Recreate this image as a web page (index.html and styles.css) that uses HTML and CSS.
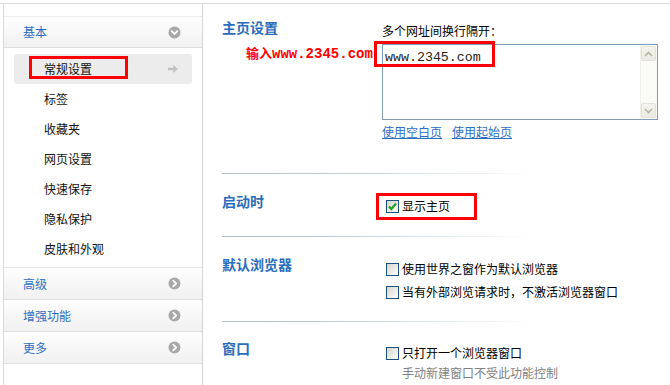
FILE: index.html
```html
<!DOCTYPE html>
<html lang="zh-CN">
<head>
<meta charset="utf-8">
<title>设置</title>
<link rel="stylesheet" href="styles.css">
</head>
<body>
<div class="page">
  <aside class="sidebar">
    <div class="sidebar-top"></div>
    <div class="group-header first">
      <span class="group-name">基本</span>
      <svg class="circle-icon" width="13" height="13" viewBox="0 0 13 13"><circle cx="6.5" cy="6.5" r="6" fill="#a8a8a8"/><path d="M3.7 5.2L6.5 8L9.3 5.2" fill="none" stroke="#fff" stroke-width="1.9" stroke-linecap="round" stroke-linejoin="round"/></svg>
    </div>
    <ul class="nav-list">
      <li class="nav-item active"><span>常规设置</span><svg class="nav-arrow" width="10" height="8" viewBox="0 0 10 8"><path d="M0 2.8h5.2V0L10 4L5.2 8V5.2H0z" fill="#c2c2c2"/></svg></li>
      <li class="nav-item"><span>标签</span></li>
      <li class="nav-item"><span>收藏夹</span></li>
      <li class="nav-item"><span>网页设置</span></li>
      <li class="nav-item"><span>快速保存</span></li>
      <li class="nav-item"><span>隐私保护</span></li>
      <li class="nav-item"><span>皮肤和外观</span></li>
    </ul>
    <div class="group-header">
      <span class="group-name">高级</span>
      <svg class="circle-icon" width="13" height="13" viewBox="0 0 13 13"><circle cx="6.5" cy="6.5" r="6" fill="#a8a8a8"/><path d="M5.3 3.7L8.1 6.5L5.3 9.3" fill="none" stroke="#fff" stroke-width="1.9" stroke-linecap="round" stroke-linejoin="round"/></svg>
    </div>
    <div class="group-header">
      <span class="group-name">增强功能</span>
      <svg class="circle-icon" width="13" height="13" viewBox="0 0 13 13"><circle cx="6.5" cy="6.5" r="6" fill="#a8a8a8"/><path d="M5.3 3.7L8.1 6.5L5.3 9.3" fill="none" stroke="#fff" stroke-width="1.9" stroke-linecap="round" stroke-linejoin="round"/></svg>
    </div>
    <div class="group-header">
      <span class="group-name">更多</span>
      <svg class="circle-icon" width="13" height="13" viewBox="0 0 13 13"><circle cx="6.5" cy="6.5" r="6" fill="#a8a8a8"/><path d="M5.3 3.7L8.1 6.5L5.3 9.3" fill="none" stroke="#fff" stroke-width="1.9" stroke-linecap="round" stroke-linejoin="round"/></svg>
    </div>
  </aside>

  <main class="content">
    <section class="section sec-home">
      <h2 class="section-title">主页设置</h2>
      <div class="controls">
        <div class="field-label">多个网址间换行隔开：</div>
        <div class="textbox">
          <div class="textbox-text">www.2345.com</div>
          <div class="scrollbar">
            <div class="sb-btn"><svg width="9" height="6" viewBox="0 0 9 6"><path d="M1 5L4.5 1.5L8 5" fill="none" stroke="#b5b5a8" stroke-width="1.6"/></svg></div>
            <div class="sb-btn"><svg width="9" height="6" viewBox="0 0 9 6"><path d="M1 1L4.5 4.5L8 1" fill="none" stroke="#b5b5a8" stroke-width="1.6"/></svg></div>
          </div>
        </div>
        <div class="links"><a class="link" href="#">使用空白页</a><a class="link" href="#">使用起始页</a></div>
      </div>
    </section>
    <div class="divider"></div>

    <section class="section sec-start">
      <h2 class="section-title">启动时</h2>
      <div class="controls">
        <label class="check-row"><span class="checkbox checked"><svg width="11" height="11" viewBox="0 0 11 11"><path d="M2 5.5L4.3 8L9 2.5" fill="none" stroke="#22a322" stroke-width="2.2"/></svg></span><span>显示主页</span></label>
      </div>
    </section>
    <div class="divider"></div>

    <section class="section sec-default">
      <h2 class="section-title">默认浏览器</h2>
      <div class="controls">
        <label class="check-row"><span class="checkbox"></span><span>使用世界之窗作为默认浏览器</span></label>
        <label class="check-row second"><span class="checkbox"></span><span>当有外部浏览请求时，不激活浏览器窗口</span></label>
      </div>
    </section>
    <div class="divider"></div>

    <section class="section sec-window">
      <h2 class="section-title">窗口</h2>
      <div class="controls">
        <label class="check-row"><span class="checkbox"></span><span>只打开一个浏览器窗口</span></label>
        <div class="hint">手动新建窗口不受此功能控制</div>
      </div>
    </section>
  </main>

  <div class="annot-box box-nav"></div>
  <div class="annot-text"><span class="annot-cn">输入</span><span class="annot-mono">www.2345.com</span></div>
  <div class="annot-box box-url"></div>
  <div class="annot-box box-check"></div>
</div>
</body>
</html>
```

FILE: styles.css
```css
* { box-sizing: border-box; }
html, body {
  margin: 0;
  padding: 0;
  background: #fff;
}
body {
  font-family: "Noto Sans CJK SC", "Liberation Sans", sans-serif;
  font-size: 12px;
  color: #000;
  width: 670px;
  height: 385px;
  overflow: hidden;
}
.page {
  position: relative;
  margin-top: 3px;
  border-top: 1px solid #dcdcdc;
  display: flex;
  height: 382px;
}

/* sidebar */
.sidebar {
  width: 200px;
  margin-left: 3px;
  border-left: 1px solid #dadada;
  border-right: 1px solid #d6d6d6;
  background: #fff;
  flex: none;
}
.sidebar-top { height: 12px; }
.group-header {
  height: 32px;
  border-bottom: 1px solid #dedede;
  background: linear-gradient(#fefefe, #f1f1f1);
  display: flex;
  align-items: center;
  justify-content: space-between;
  padding: 0 21px 0 19px;
  color: #2a6ec4;
  line-height: 16px;
}
.group-header.first {
  height: 32px;
  border-top: 1px solid #ececec;
}
.circle-icon { display: block; }
.nav-list {
  list-style: none;
  margin: 0;
  padding: 6px 0 3px;
  border-bottom: 1px solid #e6e6e6;
}
.nav-item {
  height: 30px;
  margin: 0 10px;
  padding: 0 14px 0 30px;
  display: flex;
  align-items: center;
  justify-content: space-between;
  line-height: 16px;
  color: #111;
  border-radius: 3px;
}
.nav-item.active { background: #ececec; }
.nav-arrow { display: block; }

/* content */
.content {
  flex: 1;
  min-width: 0;
}
.section {
  display: grid;
  grid-template-columns: 160px 1fr;
  padding-left: 19px;
}
.section-title {
  margin: 0;
  font-size: 14px;
  font-weight: bold;
  line-height: 20px;
  color: #2b6dbd;
}
.controls { margin-top: 6px; }
.sec-home { padding-top: 13px; padding-bottom: 33px; }
.sec-start { padding-top: 17px; padding-bottom: 21px; }
.sec-default { padding-top: 17px; padding-bottom: 20px; }
.sec-window { padding-top: 16px; }

.divider {
  height: 1px;
  width: 310px;
  margin-left: 19px;
  background: linear-gradient(to right, #b6c2ca 0%, #bcc8d0 30%, #d0dce4 55%, #e6eef2 75%, #f4f6f7 90%, rgba(255,255,255,0) 100%);
}

.field-label { line-height: 16px; }
.textbox {
  margin-top: 5px;
  width: 276px;
  height: 76px;
  border: 1px solid #7f9db9;
  display: flex;
  background: #fff;
}
.textbox-text {
  flex: 1;
  padding: 4px 2px;
  font-family: "Liberation Mono", monospace;
  font-size: 13.3px;
  line-height: 18px;
  color: #2a2218;
}
.scrollbar {
  width: 17px;
  background: #fbfbf6;
  border-left: 1px solid #f0f0ea;
  display: flex;
  flex-direction: column;
  justify-content: space-between;
  padding: 1px 1px 1px 0;
}
.sb-btn {
  height: 15px;
  background: linear-gradient(#f4f4ee, #ebebe3);
  border: 1px solid #e2e2da;
  border-radius: 2px;
  display: flex;
  align-items: center;
  justify-content: center;
}
.sb-btn svg { display: block; }
.links {
  margin-top: 4px;
  line-height: 16px;
  display: flex;
  gap: 10px;
}
.link {
  color: #2a6ec4;
  text-decoration: underline;
}

.check-row {
  display: flex;
  align-items: center;
  gap: 3px;
  padding-left: 4px;
  line-height: 18px;
  height: 18px;
}
.check-row.second { margin-top: 5px; }
.checkbox {
  width: 13px;
  height: 13px;
  border: 1px solid #1c5180;
  background: linear-gradient(135deg, #d6d6ce 0%, #efefe9 60%, #fff 100%);
  display: flex;
  align-items: center;
  justify-content: center;
  flex: none;
}
.checkbox svg { display: block; }
.hint {
  margin-top: 2px;
  padding-left: 20px;
  line-height: 18px;
  color: #808080;
}

/* red annotations over the screenshot */
.annot-box {
  position: absolute;
  border: 3px solid #f00;
}
.box-nav { left: 29px; top: 52px; width: 99px; height: 23px; }
.box-url { left: 374px; top: 37px; width: 121px; height: 26px; }
.box-check { left: 376px; top: 189px; width: 101px; height: 27px; }
.annot-text {
  position: absolute;
  left: 246px;
  top: 41px;
  color: #f00;
  font-weight: bold;
  line-height: 16px;
  white-space: nowrap;
  display: flex;
  align-items: baseline;
}
.annot-cn { font-size: 13px; }
.annot-mono {
  font-family: "Liberation Mono", monospace;
  font-size: 14px;
}
```
